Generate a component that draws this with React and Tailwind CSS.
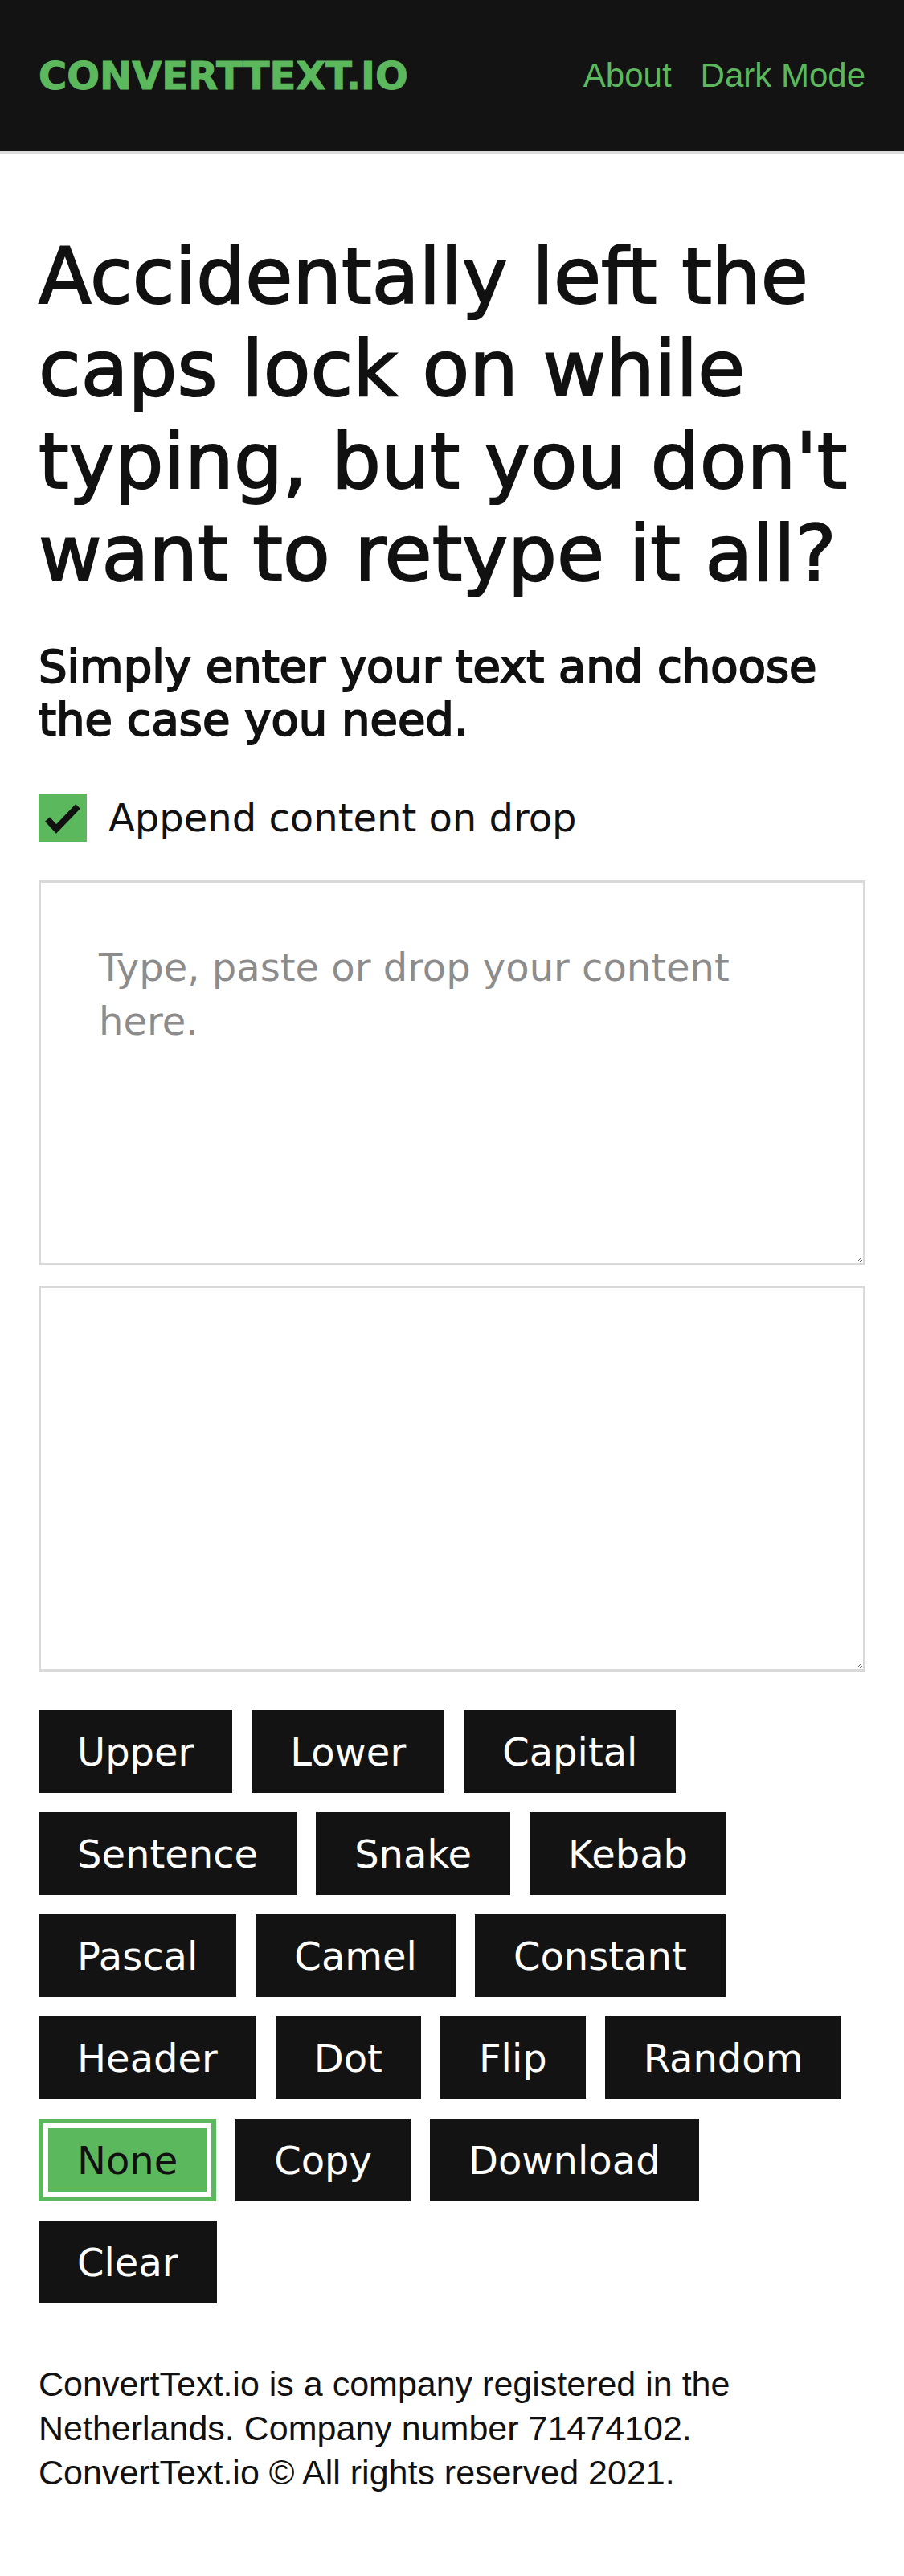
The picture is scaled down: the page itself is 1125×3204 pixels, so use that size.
import React from "react"

const cases = [
  "Upper", "Lower", "Capital", "Sentence", "Snake", "Kebab", "Pascal", "Camel",
  "Constant", "Header", "Dot", "Flip", "Random", "None", "Copy", "Download", "Clear",
]

function CaseButton({ label, active }) {
  if (active) {
    return (
      <button className="h-[103px] bg-[#5cb85c] px-[48px] text-[48px] leading-none text-[#111] shadow-[inset_0_0_0_6px_#5cb85c,inset_0_0_0_12px_#fff]">
        {label}
      </button>
    )
  }
  return (
    <button className="h-[103px] bg-[#131313] px-[48px] text-[48px] leading-none text-white">
      {label}
    </button>
  )
}

export default function App() {
  return (
    <div className="min-h-screen bg-white font-['DejaVu_Sans',sans-serif] text-[#111]">
      {/* Header */}
      <header className="flex h-[191px] items-center justify-between border-b-[3px] border-[#dcdcdc] bg-[#131313] px-[48px]">
        <a className="text-[48px] font-bold leading-none text-[#5cb85c] [-webkit-text-stroke:1px_#5cb85c]">CONVERTTEXT.IO</a>
        <nav className="flex gap-[36px] font-['Liberation_Sans',sans-serif] text-[42px] leading-none text-[#5cb85c]">
          <a>About</a>
          <a>Dark Mode</a>
        </nav>
      </header>

      <main className="px-[48px] pt-[96px]">
        <h1 className="text-[96px] leading-[115px] [-webkit-text-stroke:2px_#111]">
          Accidentally left the caps lock on while typing, but you don't want to retype it all?
        </h1>
        <h3 className="mt-[49px] text-[56px] leading-[66px] [-webkit-text-stroke:2px_#111]">
          Simply enter your text and choose the case you need.
        </h3>

        {/* Append checkbox */}
        <label className="mt-[59px] flex h-[60px] items-center gap-[27px]">
          <span className="block h-[60px] w-[60px] shrink-0 bg-[#5cb85c]">
            <svg viewBox="0 0 60 60" className="h-full w-full">
              <polyline points="11,32 22,44 49,16" fill="none" stroke="#111" strokeWidth="8" />
            </svg>
          </span>
          <span className="text-[48px] leading-none">Append content on drop</span>
        </label>

        {/* Input / output */}
        <textarea
          className="mt-[48px] block h-[479px] w-full border-[3px] border-[#d9d9d9] p-[72px] text-[48px] leading-[67px] outline-none placeholder:text-[#8c8c8c]"
          placeholder="Type, paste or drop your content here."
        />
        <textarea className="mt-[25px] block h-[480px] w-full border-[3px] border-[#d9d9d9] p-[72px] text-[48px] leading-[67px] outline-none" />

        {/* Case buttons */}
        <div className="mt-[48px] flex flex-wrap gap-x-[24px] gap-y-[24px]">
          {cases.map((c) => (
            <CaseButton key={c} label={c} active={c === "None"} />
          ))}
        </div>

        <footer className="mt-[73px] pb-[99px] font-['Liberation_Sans',sans-serif] text-[43px] leading-[55px]">
          <p>ConvertText.io is a company registered in the Netherlands. Company number 71474102.</p>
          <p>ConvertText.io © All rights reserved 2021.</p>
        </footer>
      </main>
    </div>
  )
}
